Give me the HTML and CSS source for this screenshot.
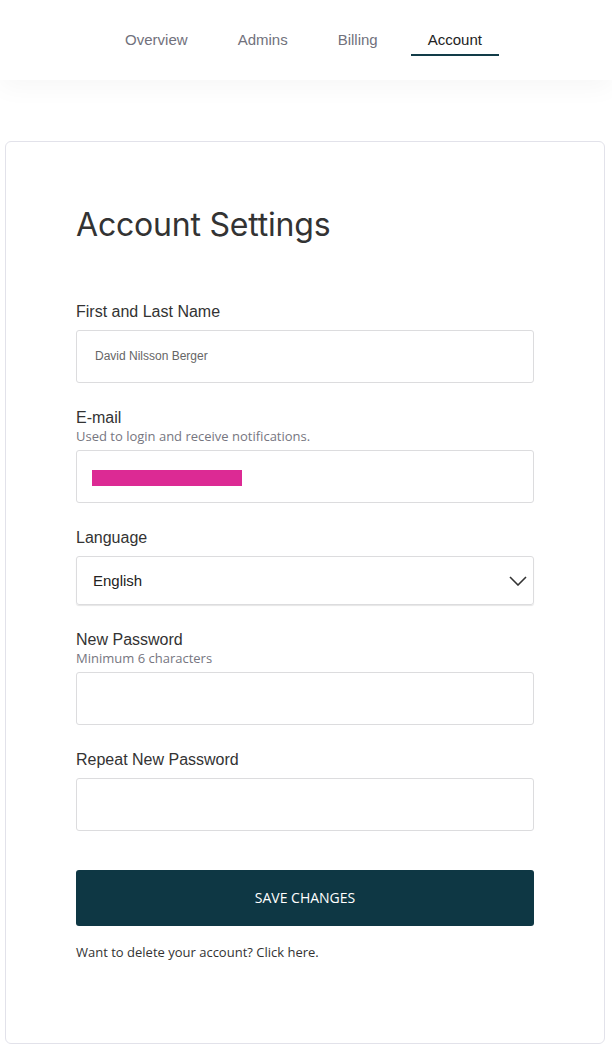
FILE: index.html
```html
<!doctype html>
<html lang="en">
<head>
	<meta charset="UTF-8">
	<title>Account Settings</title>
	<link rel="stylesheet" href="styles.css">
</head>
<body>
	<div class="topbar">
		<ul class="tabs">
			<li><a href="javascript:;">Overview</a></li>
			<li><a href="javascript:;">Admins</a></li>
			<li><a href="javascript:;">Billing</a></li>
			<li class="active"><a href="javascript:;">Account</a></li>
		</ul>
	</div>
	<div class="card">
		<h1>Account Settings</h1>
		<div class="field">
			<label>First and Last Name</label>
			<div class="box name">David Nilsson Berger</div>
		</div>
		<div class="field">
			<label>E-mail</label>
			<p class="hint">Used to login and receive notifications.</p>
			<div class="box"><span class="redact"></span></div>
		</div>
		<div class="field">
			<label>Language</label>
			<div class="box select">
				<span>English</span>
				<svg class="chev" width="18" height="10" viewBox="0 0 18 10"><path d="M1 1l8 8 8-8" fill="none" stroke="#333" stroke-width="1.6"/></svg>
			</div>
		</div>
		<div class="field">
			<label>New Password</label>
			<p class="hint">Minimum 6 characters</p>
			<div class="box"></div>
		</div>
		<div class="field">
			<label>Repeat New Password</label>
			<div class="box"></div>
		</div>
		<a class="btn" href="javascript:;">SAVE CHANGES</a>
		<p class="delete">Want to delete your account? Click here.</p>
	</div>
</body>
</html>
```

FILE: styles.css
```css
body,ul,li,p,h1{
	margin:0;
	padding:0;
}
body{
	font:16px/1.4 "Liberation Sans",Arial,sans-serif;
	color:#333;
	background:#fff;
}
ul li{
	list-style:none;
}
a{
	text-decoration:none;
	outline:none;
}
.topbar{
	height:80px;
	background:#fff;
	box-shadow:0 8px 24px rgba(0,0,0,0.035);
	position:relative;
}
.tabs{
	display:flex;
	justify-content:center;
	gap:16px;
	padding-right:5px;
}
.tabs li a{
	display:block;
	padding:30px 17px 4px;
	font-size:15px;
	line-height:20px;
	color:#71717c;
	border-bottom:2px solid transparent;
}
.tabs li.active a{
	color:#222;
	border-bottom-color:#123c48;
}
.card{
	margin:61px 0 0 5px;
	width:528px;
	padding:63px 0 82px 70px;
	border:1px solid #e2e2ea;
	border-radius:6px;
}
.card h1{
	font:400 32px/40px Inter,"Liberation Sans",sans-serif;
	color:#333;
	letter-spacing:-0.2px;
	margin-bottom:57px;
}
.field{
	margin-bottom:25px;
	width:458px;
}
.field label{
	display:block;
	font-size:16px;
	line-height:20px;
	color:#333;
	margin-bottom:8px;
}
.hint{
	font:13px/16px "Open Sans",sans-serif;
	color:#76767f;
	margin:-8px 0 6px;
}
.box{
	height:51px;
	border:1px solid #dcdcde;
	border-radius:3px;
	display:flex;
	align-items:center;
	padding:0 18px 0 15px;
}
.box.name{
	font-size:12px;
	color:#666;
	padding-left:18px;
}
.redact{
	width:150px;
	height:16px;
	margin-top:2px;
	background:#dc2a94;
}
.select{
	height:47px;
	justify-content:space-between;
	font-size:15px;
	color:#222;
	padding-left:16px;
	padding-right:6px;
	box-shadow:0 1px 1px rgba(0,0,0,0.1);
}
.btn{
	display:block;
	width:458px;
	height:56px;
	margin-top:39px;
	background:#0e3744;
	border-radius:3px;
	color:#fff;
	text-align:center;
	font:14px/56px "Open Sans",sans-serif;
}
.delete{
	font:13px/18px "Open Sans",sans-serif;
	color:#333;
	margin-top:17px;
}
```
